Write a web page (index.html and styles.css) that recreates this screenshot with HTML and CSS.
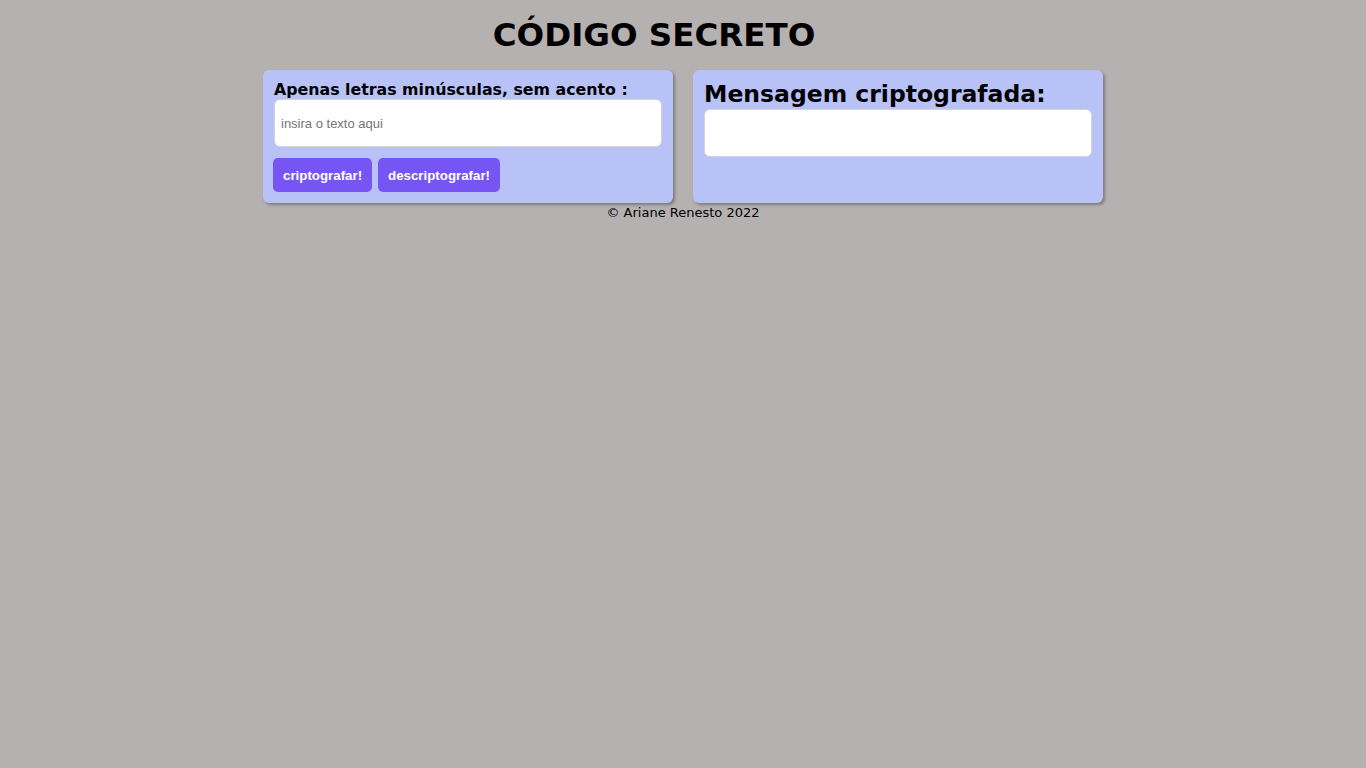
FILE: index.html
```html
<!DOCTYPE html>
<html lang="pt-BR">
<head>
<meta charset="utf-8">
<title>Código Secreto</title>
<link rel="stylesheet" href="styles.css">
</head>
<body>
<h1 class="title">CÓDIGO SECRETO</h1>
<main class="cards">
  <section class="card">
    <label class="label" for="texto">Apenas letras minúsculas, sem acento :</label>
    <input class="field" id="texto" type="text" placeholder="insira o texto aqui">
    <div class="actions">
      <button class="btn">criptografar!</button>
      <button class="btn">descriptografar!</button>
    </div>
  </section>
  <section class="card">
    <h2 class="heading">Mensagem criptografada:</h2>
    <div class="output"></div>
  </section>
</main>
<footer class="footer">© Ariane Renesto 2022</footer>
</body>
</html>
```
FILE: styles.css
```css
html, body {
  margin: 0;
  padding: 0;
}
body {
  background: #b5b1b0;
  font-family: "DejaVu Sans", Verdana, sans-serif;
  color: #000;
}
.title {
  margin: 0;
  padding: 17px 58px 0 0;
  font-size: 32.5px;
  line-height: 36px;
  text-align: center;
  font-weight: bold;
}
.cards {
  display: flex;
  justify-content: center;
  gap: 20px;
  margin-top: 17px;
}
.card {
  width: 410px;
  box-sizing: border-box;
  background: #b8c2f7;
  border-radius: 6px;
  box-shadow: 2px 2px 3px #7f7c7b;
  padding: 10px 11px 11px;
  display: flex;
  flex-direction: column;
}
.label {
  font-size: 15.8px;
  font-weight: bold;
  line-height: 19px;
}
.field {
  height: 48px;
  flex: none;
  box-sizing: border-box;
  border: 1px solid #d4d4d8;
  border-radius: 6px;
  background: #fff;
  padding: 0 6px;
  font-family: "Liberation Sans", Arial, sans-serif;
  font-size: 13px;
  outline: none;
}
.field::placeholder {
  color: #757575;
}
.actions {
  display: flex;
  gap: 6px;
  margin-top: 11px;
  margin-left: -1px;
}
.btn {
  height: 34px;
  padding: 0 10px;
  border: none;
  border-radius: 5px;
  background: #7755f5;
  color: #fff;
  font-family: "Liberation Sans", Arial, sans-serif;
  font-size: 13.3px;
  font-weight: bold;
}
.heading {
  margin: 0;
  font-size: 23.5px;
  line-height: 29px;
  font-weight: bold;
}
.output {
  height: 48px;
  flex: none;
  box-sizing: border-box;
  border: 1px solid #d4d4d8;
  border-radius: 6px;
  background: #fff;
}
.footer {
  text-align: center;
  font-size: 13px;
  line-height: 16px;
  margin-top: 2px;
}
```
